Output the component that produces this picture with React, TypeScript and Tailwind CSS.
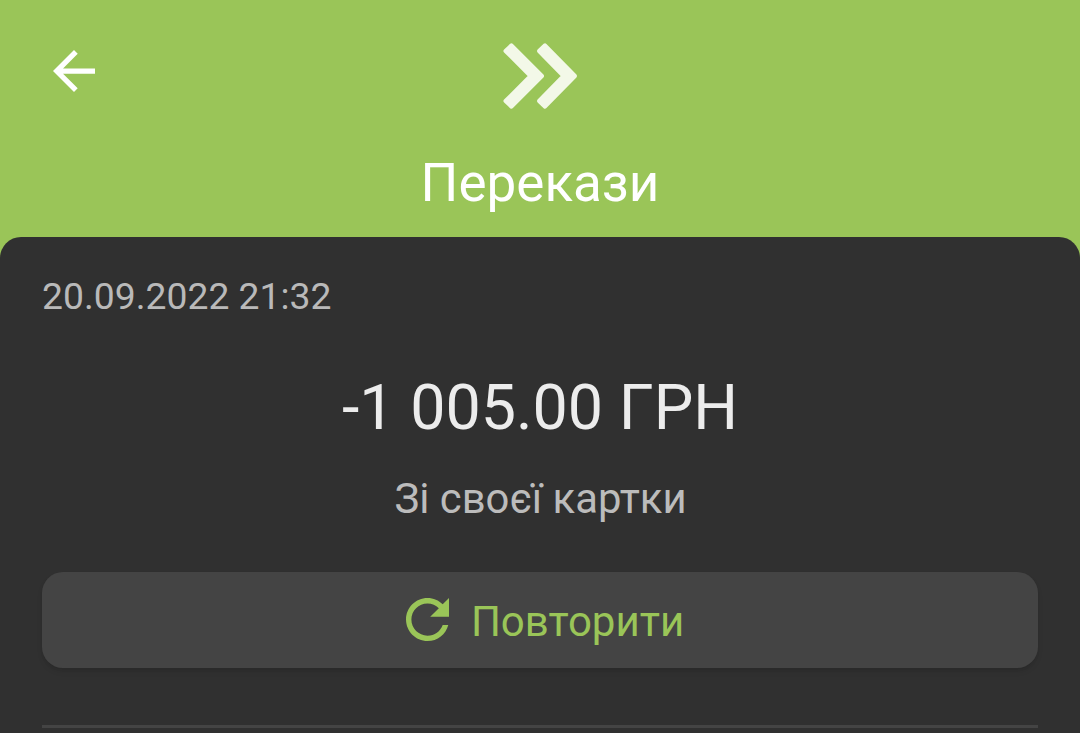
const transfer = {
  category: "Перекази",
  date: "20.09.2022 21:32",
  amount: "-1 005.00 ГРН",
  source: "Зі своєї картки",
};

function BackIcon() {
  return (
    <svg viewBox="4 4 16 16" className="w-[42px] h-[42px]" fill="currentColor">
      <path d="M20 11H7.83l5.59-5.59L12 4l-8 8 8 8 1.41-1.41L7.83 13H20v-2z" />
    </svg>
  );
}

function TransferIcon() {
  return (
    <svg
      viewBox="0 0 76 68"
      className="w-[76px] h-[68px]"
      fill="#f3f8e8"
      stroke="#f3f8e8"
      strokeWidth="4"
      strokeLinejoin="round"
    >
      <path d="M3.5 9 9.5 3.3 40 34 9.5 64.7 3.5 59 28.5 34Z" />
      <path d="M37 9 43 3.3 73 34 43 64.7 37 59 61.5 34Z" />
    </svg>
  );
}

function RepeatIcon() {
  return (
    <svg viewBox="4 4 16 16" className="w-[43px] h-[43px]" fill="currentColor">
      <path d="M17.65 6.35C16.2 4.9 14.21 4 12 4c-4.42 0-7.99 3.58-7.99 8s3.57 8 7.99 8c3.73 0 6.84-2.55 7.73-6h-2.08c-.82 2.33-3.04 4-5.65 4-3.31 0-6-2.69-6-6s2.69-6 6-6c1.66 0 3.14.69 4.22 1.78L13 11h7V4l-2.35 2.35z" />
    </svg>
  );
}

export default function App() {
  return (
    <div className="w-[1080px] h-[733px] overflow-hidden bg-[#9ac558] font-[Roboto,sans-serif]">
      <header className="grid grid-cols-3 h-[237px] text-white">
        <button className="self-start justify-self-start mt-[49.5px] ml-[52.5px]" aria-label="Назад">
          <BackIcon />
        </button>
        <div className="flex flex-col items-center pt-[42px]">
          <TransferIcon />
          <h1 className="mt-[43px] text-[53px] leading-[60px] whitespace-nowrap">{transfer.category}</h1>
        </div>
      </header>

      <main className="h-[496px] px-[42px] rounded-t-[21px] bg-[#303030] flex flex-col">
        <p className="mt-[37px] text-[37.3px] leading-[44px] text-[#b9b9b9]">{transfer.date}</p>
        <p className="mt-[52px] text-center text-[62.8px] leading-[76px] text-[#ececec]">{transfer.amount}</p>
        <p className="mt-[28px] pl-[1px] text-center text-[41.8px] leading-[50px] text-[#bcbcbc]">{transfer.source}</p>
        <button className="mt-[48px] h-[96px] shrink-0 pl-[10px] rounded-[21px] bg-[#444444] text-[#9ac558] flex items-center justify-center gap-[22px] shadow-md">
          <span className="pb-[2px]">
            <RepeatIcon />
          </span>
          <span className="pt-1 text-[42px] leading-[50px]">Повторити</span>
        </button>
        <hr className="mt-[57px] border-t-[3px] border-[#444444]" />
      </main>
    </div>
  );
}
